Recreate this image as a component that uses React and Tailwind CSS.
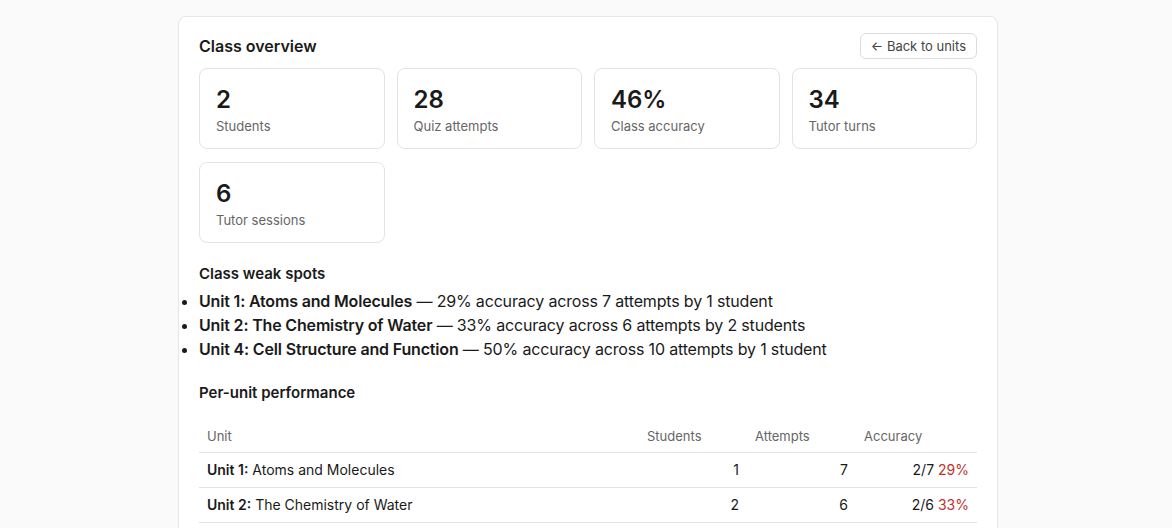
import React from "react";

const stats = [
  { value: "2", label: "Students" },
  { value: "28", label: "Quiz attempts" },
  { value: "46%", label: "Class accuracy" },
  { value: "34", label: "Tutor turns" },
  { value: "6", label: "Tutor sessions" },
];

const weakSpots = [
  { unit: "Unit 1: Atoms and Molecules", text: "29% accuracy across 7 attempts by 1 student" },
  { unit: "Unit 2: The Chemistry of Water", text: "33% accuracy across 6 attempts by 2 students" },
  { unit: "Unit 4: Cell Structure and Function", text: "50% accuracy across 10 attempts by 1 student" },
];

const rows = [
  { num: "Unit 1:", name: "Atoms and Molecules", students: 1, attempts: 7, correct: "2/7", pct: "29%", color: "text-[#c0322b]" },
  { num: "Unit 2:", name: "The Chemistry of Water", students: 2, attempts: 6, correct: "2/6", pct: "33%", color: "text-[#c0322b]" },
  { num: "Unit 3:", name: "Biological Molecules", students: 1, attempts: 5, correct: "4/5", pct: "80%", color: "text-[#2f855a]" },
  { num: "Unit 4:", name: "Cell Structure and Function", students: 1, attempts: 10, correct: "5/10", pct: "50%", color: "text-[#b7791f]" },
];

const App = () => {
  return (
    <div className="min-h-screen bg-[#fafafa] pt-4 pb-10 pl-1 text-[#1a1a1a]" style={{ fontFamily: "Inter, 'Noto Sans', sans-serif" }}>
      <div className="mx-auto w-[820px] rounded-lg border border-[#e6e6e6] bg-white px-5 pt-4 pb-6">
        {/* Header */}
        <div className="mb-[9px] flex h-[26px] items-center justify-between">
          <h1 className="text-[16px] font-semibold leading-5">Class overview</h1>
          <button className="flex h-[26px] items-center rounded-md border border-[#dcdcdc] bg-white px-[10px] pt-[2px] text-[13px] text-[#444]">
            ← Back to units
          </button>
        </div>

        {/* Stats */}
        <div className="grid grid-cols-4 gap-x-3 gap-y-[13px]">
          {stats.map((s) => (
            <div key={s.label} className="rounded-lg border border-[#e3e3e3] bg-white px-4 pt-[15px] pb-[13px]">
              <div className="text-[24px] font-semibold leading-8">{s.value}</div>
              <div className="mt-px text-[13px] leading-[18px] text-[#666]">{s.label}</div>
            </div>
          ))}
        </div>

        {/* Weak spots */}
        <h2 className="mt-[21px] text-[15px] font-semibold leading-5">Class weak spots</h2>
        <ul className="mt-[5px] list-disc">
          {weakSpots.map((w) => (
            <li key={w.unit} className="text-[16px] leading-6 tracking-[-0.17px]">
              <span className="font-semibold">{w.unit}</span> — {w.text}
            </li>
          ))}
        </ul>

        {/* Per-unit */}
        <h2 className="mt-[22px] text-[15px] font-semibold leading-5">Per-unit performance</h2>
        <table className="mt-[19px] w-full border-collapse text-[14px]">
          <thead>
            <tr className="border-b border-[#e3e3e3]">
              <th className="px-2 pt-[5px] pb-[7px] text-left text-[13px] font-normal leading-[18px] text-[#666]">Unit</th>
              <th className="w-[108px] px-2 pt-[5px] pb-[7px] text-left text-[13px] font-normal leading-[18px] text-[#666]">Students</th>
              <th className="w-[109px] px-2 pt-[5px] pb-[7px] text-left text-[13px] font-normal leading-[18px] text-[#666]">Attempts</th>
              <th className="w-[121px] px-2 pt-[5px] pb-[7px] text-left text-[13px] font-normal leading-[18px] text-[#666]">Accuracy</th>
            </tr>
          </thead>
          <tbody>
            {rows.map((r) => (
              <tr key={r.num} className="border-b border-[#e3e3e3]">
                <td className="px-2 py-2 leading-[18px]">
                  <span className="font-semibold">{r.num}</span> {r.name}
                </td>
                <td className="px-2 py-2 text-right leading-[18px]">{r.students}</td>
                <td className="px-2 py-2 text-right leading-[18px]">{r.attempts}</td>
                <td className="px-2 py-2 text-right leading-[18px]">
                  {r.correct} <span className={r.color}>{r.pct}</span>
                </td>
              </tr>
            ))}
          </tbody>
        </table>
      </div>
    </div>
  );
};

export default App;
